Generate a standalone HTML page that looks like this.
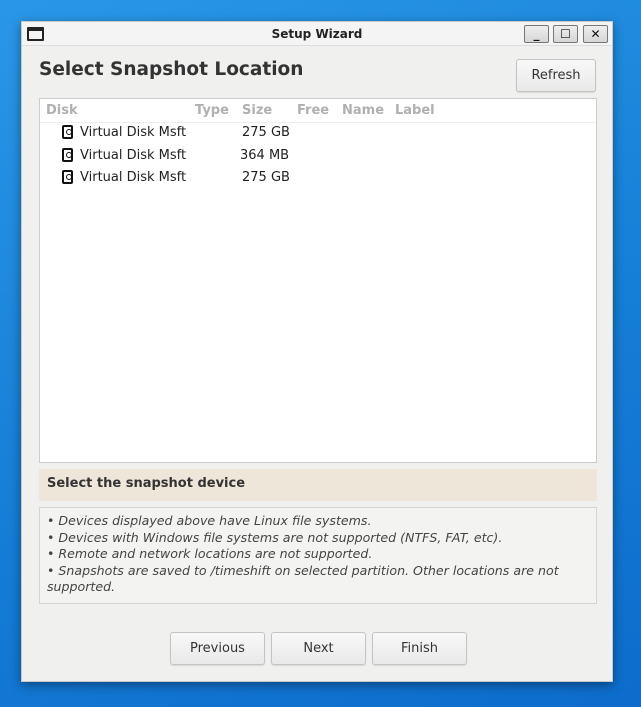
<!DOCTYPE html>
<html><head><style>
*{margin:0;padding:0;box-sizing:border-box}
body{width:641px;height:707px;overflow:hidden;background:linear-gradient(160deg,#2a97e6 0%,#1780d8 50%,#0d6ccc 100%);font-family:"DejaVu Sans","Liberation Sans",sans-serif;position:relative}
.win{position:absolute;left:21px;top:21px;width:592px;height:661px;background:#f0f0ee;box-shadow:0 3px 10px rgba(0,0,0,.4);border:1px solid #c8c8c8}
.tb{position:absolute;left:0;top:0;width:100%;height:24px;background:#f4f4f4;border-bottom:1px solid #ddd}
.tb .t{position:absolute;left:0;right:0;top:5px;text-align:center;font-size:12px;font-weight:bold;color:#222}
.ic{position:absolute;left:5px;top:5px;width:17px;height:14px;border:2px solid #222;border-top-width:4px;border-radius:1px}
.wb{position:absolute;top:3px;width:25px;height:18px;border:1px solid #777;background:linear-gradient(#eee,#d6d6d6);border-radius:2px;font-size:12px;font-weight:bold;text-align:center;line-height:16px;color:#111}
h1{position:absolute;left:17px;top:37px;font-size:18.5px;font-weight:bold;color:#333}
.btn{position:absolute;border:1px solid #c4c4c4;border-radius:3px;background:linear-gradient(#f8f8f8,#e9e9e9);font-size:13px;color:#333;text-align:center;box-shadow:0 1px 1px rgba(0,0,0,.1)}
.list{position:absolute;left:17px;top:76px;width:558px;height:365px;background:#fff;border:1px solid #ccc}
.hd{height:24px;border-bottom:1px solid #eee;font-size:13px;font-weight:bold;color:#b0b0b0;position:relative}
.hd span{position:absolute;top:4px}
.row{position:absolute;font-size:13px;color:#222;height:20px}
.hdd{position:absolute;width:11px;height:14px;border:2px solid #111;border-radius:2px;background:#fff}
.hdd:after{content:"";position:absolute;left:1.5px;top:1.5px;width:4px;height:4px;border:1.5px solid #111;border-radius:50%}
.info{position:absolute;left:17px;top:447px;width:558px;height:32px;background:#efe6da;font-size:13px;font-weight:bold;color:#333;padding:7px 8px}
.notes{position:absolute;left:17px;top:485px;width:558px;height:97px;border:1px solid #d4d4d4;background:#f3f3f1;font-size:12.6px;font-style:italic;color:#444;padding:5px 7px;line-height:16.5px}
</style></head><body>
<div class="win">
<div class="tb"><div class="ic"></div><div class="t">Setup Wizard</div>
<div class="wb" style="left:502px">_</div><div class="wb" style="left:531px">☐</div><div class="wb" style="left:561px">✕</div></div>
<h1>Select Snapshot Location</h1>
<div class="btn" style="left:494px;top:37px;width:80px;height:33px;line-height:31px">Refresh</div>
<div class="list">
<div class="hd"><span style="left:6px">Disk</span><span style="left:155px">Type</span><span style="left:202px">Size</span><span style="left:257px">Free</span><span style="left:302px">Name</span><span style="left:355px">Label</span></div>
<div class="hdd" style="left:22px;top:26px"></div><div class="row" style="left:40px;top:26px">Virtual Disk Msft</div><div class="row" style="left:202px;top:26px">275 GB</div>
<div class="hdd" style="left:22px;top:49px"></div><div class="row" style="left:40px;top:49px">Virtual Disk Msft</div><div class="row" style="left:200px;top:49px">364 MB</div>
<div class="hdd" style="left:22px;top:71px"></div><div class="row" style="left:40px;top:71px">Virtual Disk Msft</div><div class="row" style="left:202px;top:71px">275 GB</div>
</div>
<div class="info">Select the snapshot device</div>
<div class="notes">• Devices displayed above have Linux file systems.<br>• Devices with Windows file systems are not supported (NTFS, FAT, etc).<br>• Remote and network locations are not supported.<br>• Snapshots are saved to /timeshift on selected partition. Other locations are not supported.</div>
<div class="btn" style="left:148px;top:610px;width:95px;height:33px;line-height:31px">Previous</div>
<div class="btn" style="left:249px;top:610px;width:95px;height:33px;line-height:31px">Next</div>
<div class="btn" style="left:350px;top:610px;width:95px;height:33px;line-height:31px">Finish</div>
</div>
</body></html>
